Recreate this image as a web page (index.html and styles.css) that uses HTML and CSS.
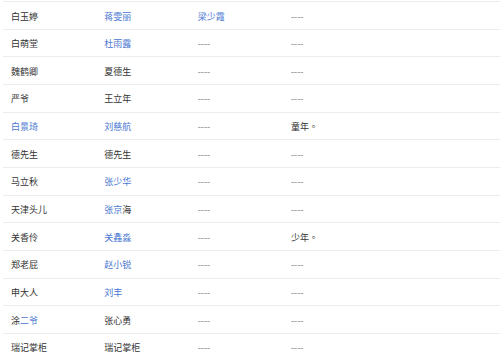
FILE: index.html
```html
<!DOCTYPE html>
<html lang="zh">
<head>
<meta charset="utf-8">
<link rel="stylesheet" href="styles.css">
</head>
<body>
<div class="table">
  <div class="row"><span class="cell">白玉婷</span><span class="cell link">蒋雯丽</span><span class="cell link">梁少霞</span><span class="cell dash">----</span></div>
  <div class="row"><span class="cell">白萌堂</span><span class="cell link">杜雨露</span><span class="cell dash">----</span><span class="cell dash">----</span></div>
  <div class="row"><span class="cell">魏鹤卿</span><span class="cell">夏德生</span><span class="cell dash">----</span><span class="cell dash">----</span></div>
  <div class="row"><span class="cell">严爷</span><span class="cell">王立年</span><span class="cell dash">----</span><span class="cell dash">----</span></div>
  <div class="row"><span class="cell link">白景琦</span><span class="cell link">刘慈航</span><span class="cell dash">----</span><span class="cell">童年<span class="stop" lang="zh-TW">。</span></span></div>
  <div class="row"><span class="cell">德先生</span><span class="cell">德先生</span><span class="cell dash">----</span><span class="cell dash">----</span></div>
  <div class="row"><span class="cell">马立秋</span><span class="cell link">张少华</span><span class="cell dash">----</span><span class="cell dash">----</span></div>
  <div class="row"><span class="cell">天津头儿</span><span class="cell"><span class="link">张京</span>海</span><span class="cell dash">----</span><span class="cell dash">----</span></div>
  <div class="row"><span class="cell">关香伶</span><span class="cell link">关鑫淼</span><span class="cell dash">----</span><span class="cell">少年<span class="stop" lang="zh-TW">。</span></span></div>
  <div class="row"><span class="cell">郑老屁</span><span class="cell link">赵小锐</span><span class="cell dash">----</span><span class="cell dash">----</span></div>
  <div class="row"><span class="cell">申大人</span><span class="cell link">刘丰</span><span class="cell dash">----</span><span class="cell dash">----</span></div>
  <div class="row"><span class="cell">涂<span class="link">二爷</span></span><span class="cell">张心勇</span><span class="cell dash">----</span><span class="cell dash">----</span></div>
  <div class="row"><span class="cell">瑞记掌柜</span><span class="cell">瑞记掌柜</span><span class="cell dash">----</span><span class="cell dash">----</span></div>
</div>
</body>
</html>
```

FILE: styles.css
```css
html, body {
  margin: 0;
  padding: 0;
  background: #ffffff;
}
body {
  font-family: "Noto Sans CJK SC", "Noto Sans", sans-serif;
  font-size: 9px;
  color: #333333;
}
.table {
  margin-left: 3px;
  padding-top: 1px;
}
.row {
  display: grid;
  grid-template-columns: 93.33px 93.33px 93.33px 1fr;
  box-sizing: border-box;
  height: 27.67px;
  border-top: 1px solid #ececec;
  padding-top: 8.5px;
  line-height: 12px;
}
.cell {
  padding-left: 8px;
  white-space: nowrap;
}
.link {
  color: #4a78d2;
}
.dash {
  color: #777777;
}
.stop {
  font-family: "Noto Sans CJK TC", sans-serif;
}
```
